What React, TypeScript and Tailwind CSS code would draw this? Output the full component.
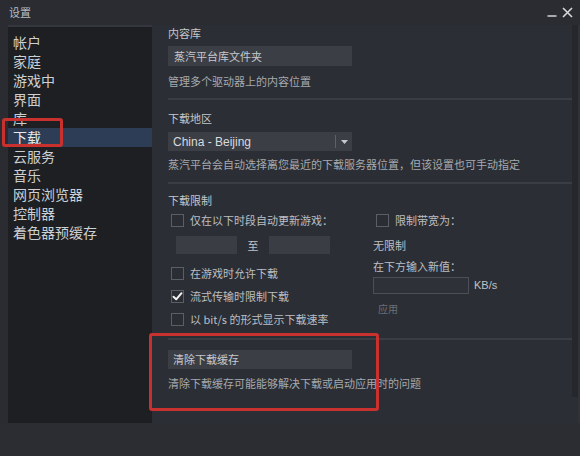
import React from "react";

const navItems = ["帐户", "家庭", "游戏中", "界面", "库", "下载", "云服务", "音乐", "网页浏览器", "控制器", "着色器预缓存"];

function Checkbox({ checked = false }: { checked?: boolean }) {
  return (
    <div className="w-[13px] h-[13px] border border-[#5b5e64] bg-[#2a2d33] flex items-center justify-center shrink-0">
      {checked && (
        <svg width="11" height="11" viewBox="0 0 11 11">
          <path d="M1.5 5.8 L4.2 8.3 L9.5 2.2" stroke="#f2f2f2" strokeWidth="2" fill="none" strokeLinecap="round" strokeLinejoin="round" />
        </svg>
      )}
    </div>
  );
}

function CheckRow({ label, checked = false, className = "" }: { label: string; checked?: boolean; className?: string }) {
  return (
    <div className={`flex items-center h-[16px] pl-[3px] gap-[6px] ${className}`}>
      <Checkbox checked={checked} />
      <span className="text-[11px] leading-[16px] text-[#bcbfc3]">{label}</span>
    </div>
  );
}

export default function App() {
  return (
    <div className="w-[580px] h-[456px] bg-[#2a2c31] flex flex-col relative overflow-hidden font-['Noto_Sans_CJK_SC',sans-serif]">
      {/* title bar */}
      <div className="h-[25px] flex items-center justify-between pl-[9px] pr-[7px] shrink-0">
        <span className="text-[11px] text-[#b9bcc0]">设置</span>
        <div className="flex items-center gap-[5px]">
          <svg width="10" height="10" viewBox="0 0 10 10">
            <path d="M0.5 8 H9.5" stroke="#c8cacd" strokeWidth="1.6" />
          </svg>
          <svg width="11" height="11" viewBox="0 0 11 11">
            <path d="M1 1 L10 10 M10 1 L1 10" stroke="#d6d8da" strokeWidth="1.6" />
          </svg>
        </div>
      </div>

      {/* body */}
      <div className="flex h-[398px] pl-[8px] shrink-0">
        {/* sidebar */}
        <div className="w-[144px] bg-[#1d1f23] border-t-[2px] border-[#34373d] pt-[6px] flex flex-col">
          {navItems.map((n) => (
            <div
              key={n}
              className={`h-[19px] flex items-center pl-[5px] text-[14px] leading-[19px] ${n === "下载" ? "bg-[#2c3d55] text-[#e8eaec]" : "text-[#cdd0d3]"}`}
            >
              {n}
            </div>
          ))}
        </div>

        {/* main */}
        <div className="flex-1 flex bg-[#2b2e34]">
          <div className="flex-1 pl-[16px] flex flex-col">
            <div className="mt-[0px] text-[11px] leading-[16px] text-[#c3c6ca]">内容库</div>
            <div className="mt-[5px] w-[184px] h-[20px] bg-[#3b3e45] flex items-center pl-[6px] text-[11px] text-[#c6c9cd]">蒸汽平台库文件夹</div>
            <div className="mt-[7px] text-[11px] leading-[16px] text-[#a6a9ae]">管理多个驱动器上的内容位置</div>
            <div className="mt-[9px] h-[2px] bg-[#3a3d43]" />

            <div className="mt-[10px] text-[11px] leading-[16px] text-[#c3c6ca]">下载地区</div>
            <div className="mt-[6px] w-[184px] h-[19px] bg-[#3b3e45] flex items-center">
              <span className="flex-1 pl-[5px] text-[12px] font-medium text-[#d8dadd] font-['Liberation_Sans',sans-serif]">China - Beijing</span>
              <div className="w-[1px] h-[13px] bg-[#5e6167]" />
              <div className="w-[16px] flex items-center justify-center">
                <svg width="7" height="4" viewBox="0 0 7 4">
                  <path d="M0 0 H7 L3.5 4 Z" fill="#c5c7ca" />
                </svg>
              </div>
            </div>
            <div className="mt-[5px] text-[11px] leading-[16px] text-[#a6a9ae] whitespace-nowrap">蒸汽平台会自动选择离您最近的下载服务器位置，但该设置也可手动指定</div>
            <div className="mt-[10px] h-[2px] bg-[#3a3d43]" />

            <div className="mt-[8px] text-[11px] leading-[16px] text-[#c3c6ca]">下载限制</div>
            <div className="flex">
              <div className="w-[205px] flex flex-col">
                <CheckRow label="仅在以下时段自动更新游戏：" className="mt-[4px]" />
                <div className="mt-[8px] flex items-center pl-[8px]">
                  <div className="w-[61px] h-[18px] bg-[#3a3d44]" />
                  <span className="w-[32px] text-center text-[11px] text-[#bfc2c6]">至</span>
                  <div className="w-[61px] h-[18px] bg-[#3a3d44]" />
                </div>
                <CheckRow label="在游戏时允许下载" className="mt-[11px]" />
                <CheckRow label="流式传输时限制下载" checked className="mt-[7px]" />
                <CheckRow label="以 bit/s 的形式显示下载速率" className="mt-[7px]" />
              </div>
              <div className="flex flex-col">
                <CheckRow label="限制带宽为：" className="mt-[4px]" />
                <div className="mt-[9px] text-[11px] leading-[16px] text-[#bcbfc3]">无限制</div>
                <div className="mt-[5px] text-[11px] leading-[16px] text-[#bcbfc3]">在下方输入新值：</div>
                <div className="mt-[3px] flex items-center gap-[5px]">
                  <div className="w-[96px] h-[17px] border border-[#4c4f55] bg-[#2e3137]" />
                  <span className="text-[11px] text-[#bfc2c6] font-['Liberation_Sans',sans-serif]">KB/s</span>
                </div>
                <div className="mt-[7px] pl-[5px] text-[10px] leading-[16px] text-[#6c7076]">应用</div>
              </div>
            </div>
            <div className="mt-[11px] h-[2px] bg-[#3a3d43]" />
            <div className="mt-[10px] w-[184px] h-[19px] bg-[#3b3e45] flex items-center pl-[5px] text-[11px] text-[#c6c9cd]">清除下载缓存</div>
            <div className="mt-[6px] text-[11px] leading-[16px] text-[#a6a9ae]">清除下载缓存可能能够解决下载或启动应用时的问题</div>
          </div>
          {/* scrollbar */}
          <div className="w-[6px] flex flex-col">
            <div className="h-[372px] bg-[#25272c]" />
          </div>
        </div>
        <div className="w-[2px] bg-[#2f3237]" />
      </div>

      {/* bottom bar */}
      <div className="flex-1 bg-[#2b2d32]" />

      {/* annotations */}
      <div className="absolute left-[2px] top-[118px] w-[61px] h-[29px] border-[3px] border-[#c9312f] rounded-[3px]" />
      <div className="absolute left-[149px] top-[333px] w-[230px] h-[78px] border-[3px] border-[#c9312f] rounded-[3px]" />
    </div>
  );
}
